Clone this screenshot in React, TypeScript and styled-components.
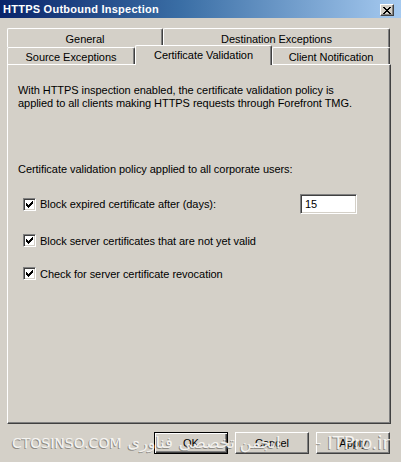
import React from 'react';
import styled, { createGlobalStyle } from 'styled-components';

const GlobalStyle = createGlobalStyle`
  html, body {
    margin: 0;
    padding: 0;
    background: #d4d0c8;
  }
  body {
    font-family: "Liberation Sans", Arial, sans-serif;
    font-size: 11px;
    letter-spacing: -0.05px;
    color: #000;
  }
`;

// Outer dialog frame
const Dialog = styled.div`
  position: relative;
  width: 401px;
  height: 462px;
  background: #d4d0c8;
  display: flex;
  flex-direction: column;
  overflow: hidden;
`;

// Caption with the classic blue gradient
const TitleBar = styled.div`
  height: 18px;
  flex: none;
  display: flex;
  align-items: center;
  justify-content: space-between;
  padding: 0 7px 0 3px;
  background: linear-gradient(to right, #0a246a 0%, #3a6ea5 45%, #a6caf0 100%);
`;

const Title = styled.span`
  color: #fff;
  font-weight: bold;
  font-size: 11px;
  letter-spacing: 0.25px;
`;

const CloseButton = styled.div`
  width: 14px;
  height: 12px;
  margin-top: 2px;
  box-sizing: border-box;
  background: #d4d0c8;
  border: 1px solid;
  border-color: #fff #404040 #404040 #fff;
  box-shadow: inset -1px -1px #808080;
  display: flex;
  align-items: center;
  justify-content: center;
`;

const Body = styled.div`
  flex: 1;
  display: flex;
  flex-direction: column;
  padding: 10px 10px 0 7px;
`;

// Two stacked rows of tabs
const TabStrip = styled.div`
  display: flex;
  flex-direction: column;
`;

const TabRow = styled.div<{ $front?: boolean }>`
  display: flex;
  align-items: flex-end;
  height: ${p => (p.$front ? 17 : 19)}px;
  position: relative;
  z-index: 1;
`;

const Tab = styled.div<{ $width: number; $selected?: boolean }>`
  width: ${p => p.$width}px;
  ${p => (p.$selected ? 'height: 20px; margin-bottom: -1px;' : 'height: 100%;')}
  flex: none;
  box-sizing: border-box;
  background: #d4d0c8;
  border-top: 1px solid #fff;
  border-left: 1px solid #fff;
  border-right: 1px solid #404040;
  border-radius: 2px 2px 0 0;
  box-shadow: inset -1px 0 #808080;
  display: flex;
  align-items: center;
  justify-content: center;
  padding-top: ${p => (p.$selected ? 0 : 1)}px;
  padding-bottom: ${p => (p.$selected ? 2 : 0)}px;
  white-space: nowrap;
`;

// Tab page
const Panel = styled.div`
  height: 360px;
  flex: none;
  box-sizing: border-box;
  border: 1px solid;
  border-color: #fff #404040 #404040 #fff;
  box-shadow: inset -1px -1px #808080;
  padding: 19px 11px 0 10px;
  display: flex;
  flex-direction: column;
`;

const Text = styled.p<{ $gap?: number }>`
  margin: ${p => p.$gap ?? 0}px 0 0;
  line-height: 13px;
`;

const Options = styled.div`
  display: flex;
  flex-direction: column;
  gap: 20px;
  margin-top: 18px;
  padding-left: 5px;
`;

const OptionRow = styled.label`
  display: flex;
  align-items: center;
  gap: 4px;
  min-height: 13px;
`;

const CheckBox = styled.span`
  width: 13px;
  height: 13px;
  flex: none;
  box-sizing: border-box;
  background: #fff;
  border: 1px solid;
  border-color: #808080 #fff #fff #808080;
  box-shadow: inset 1px 1px #404040, inset -1px -1px #d4d0c8;
  display: flex;
  align-items: center;
  justify-content: center;
`;

const NumberBox = styled.div`
  width: 57px;
  height: 20px;
  margin-left: auto;
  margin-right: 22px;
  box-sizing: border-box;
  background: #fff;
  border: 1px solid;
  border-color: #808080 #fff #fff #808080;
  box-shadow: inset 1px 1px #404040, inset -1px -1px #d4d0c8;
  padding-left: 4px;
  display: flex;
  align-items: center;
`;

const ButtonRow = styled.div`
  display: flex;
  justify-content: flex-end;
  gap: 7px;
  margin-top: 8px;
  padding-right: 1px;
`;

const Button = styled.div<{ $default?: boolean }>`
  width: 74px;
  height: 22px;
  box-sizing: border-box;
  background: #d4d0c8;
  display: flex;
  align-items: center;
  justify-content: center;
  ${p =>
    p.$default
      ? `border: 1px solid #000;
         box-shadow: inset 1px 1px #fff, inset -1px -1px #404040, inset -2px -2px #808080;`
      : `border: 1px solid;
         border-color: #fff #404040 #404040 #fff;
         box-shadow: inset -1px -1px #808080;`}
`;

// Embossed site stamp laid over the button area
const Watermark = styled.div`
  position: absolute;
  left: 12px;
  right: 11px;
  top: 430px;
  height: 26px;
  display: flex;
  align-items: center;
  gap: 6px;
  pointer-events: none;
  font-family: "DejaVu Sans", "Liberation Sans", sans-serif;
  font-size: 14px;
  letter-spacing: 0;
  color: rgba(250, 249, 246, 0.92);
  text-shadow: -1px 1px 0 rgba(96, 94, 90, 0.6);
  white-space: nowrap;
`;

const Stamp = styled.span<{ $size?: number; $push?: boolean }>`
  font-size: ${p => p.$size ?? 14}px;
  line-height: 1;
  ${p => (p.$push ? 'margin-left: auto;' : '')}
`;

const Check = () => (
  <svg width="7" height="7" viewBox="0 0 7 7" shapeRendering="crispEdges">
    <path
      fill="#000"
      d="M6 0h1v3h-1v1h-1v1h-1v1h-1v1h-1v-1h-1v-1h-1v-3h1v1h1v1h1v-1h1v-1h1v-1h1z"
    />
  </svg>
);

const CloseGlyph = () => (
  <svg width="8" height="7" viewBox="0 0 8 7" shapeRendering="crispEdges">
    <path
      fill="#000"
      d="M0 0h2v1h1v1h2v-1h1v-1h2v1h-1v1h-1v1h-1v1h1v1h1v1h1v1h-2v-1h-1v-1h-2v1h-1v1h-2v-1h1v-1h1v-1h1v-1h-1v-1h-1v-1h-1z"
    />
  </svg>
);

const App: React.FC = () => (
  <>
    <GlobalStyle />
    <Dialog>
      <TitleBar>
        <Title>HTTPS Outbound Inspection</Title>
        <CloseButton>
          <CloseGlyph />
        </CloseButton>
      </TitleBar>

      <Body>
        <TabStrip>
          <TabRow>
            <Tab $width={156}>General</Tab>
            <Tab $width={227}>Destination Exceptions</Tab>
          </TabRow>
          <TabRow $front>
            <Tab $width={128}>Source Exceptions</Tab>
            <Tab $width={137} $selected>Certificate Validation</Tab>
            <Tab $width={118}>Client Notification</Tab>
          </TabRow>
        </TabStrip>

        <Panel>
          <Text>
            With HTTPS inspection enabled, the certificate validation policy is
            <br />
            applied to all clients making HTTPS requests through Forefront TMG.
          </Text>
          <Text $gap={53}>Certificate validation policy applied to all corporate users:</Text>

          <Options>
            <OptionRow>
              <CheckBox>
                <Check />
              </CheckBox>
              Block expired certificate after (days):
              <NumberBox>15</NumberBox>
            </OptionRow>
            <OptionRow>
              <CheckBox>
                <Check />
              </CheckBox>
              Block server certificates that are not yet valid
            </OptionRow>
            <OptionRow>
              <CheckBox>
                <Check />
              </CheckBox>
              Check for server certificate revocation
            </OptionRow>
          </Options>
        </Panel>

        <ButtonRow>
          <Button $default>OK</Button>
          <Button>Cancel</Button>
          <Button>Apply</Button>
        </ButtonRow>
      </Body>

      <Watermark>
        <Stamp>CTOSINSO.COM</Stamp>
        <Stamp $size={16}>فناوری</Stamp>
        <Stamp $size={16}>انجمن تخصصی</Stamp>
        <Stamp $push>-</Stamp>
        <Stamp $size={18}>ITPro.ir</Stamp>
      </Watermark>
    </Dialog>
  </>
);

export default App;
